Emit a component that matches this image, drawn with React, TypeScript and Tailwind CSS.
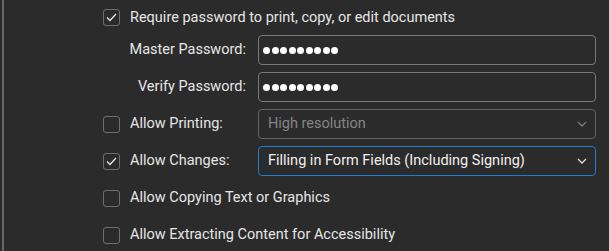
import { type FC } from "react";

const Check: FC<{ checked?: boolean }> = ({ checked }) => (
  <div className="w-[17px] h-[17px] shrink-0 rounded-[3px] border border-[#6e6e6e] flex items-center justify-center">
    {checked && (
      <svg width="11" height="9" viewBox="0 0 11 9" fill="none">
        <polyline points="1,4.5 4,7.5 10,1" stroke="#e8e8e8" strokeWidth="1.3" />
      </svg>
    )}
  </div>
);

const Chevron: FC<{ color: string }> = ({ color }) => (
  <svg width="10" height="6" viewBox="0 0 10 6" fill="none">
    <polyline points="1,1 5,5 9,1" stroke={color} strokeWidth="1.3" />
  </svg>
);

const Dots: FC = () => (
  <div className="flex gap-[1.5px]">
    {Array.from({ length: 9 }).map((_, i) => (
      <span key={i} className="w-[7px] h-[7px] rounded-full bg-white" />
    ))}
  </div>
);

const PasswordRow: FC<{ label: string }> = ({ label }) => (
  <div className="flex items-center h-[30px]">
    <div className="w-[143px] text-right">{label}</div>
    <div className="ml-[12px] w-[338px] h-[30px] rounded-[4px] border border-[#7a7a7a] flex items-center px-[4px]">
      <Dots />
    </div>
  </div>
);

const App: FC = () => {
  return (
    <div
      className="w-[609px] h-[251px] bg-[#2b2b2b] overflow-hidden pl-[2px] text-[14.5px] text-[#e6e6e6]"
      style={{ fontFamily: "Roboto, 'Liberation Sans', sans-serif" }}
    >
      <div className="h-full border-l-2 border-[#666666] pl-[99px]">
        <div className="flex flex-col">
          <div className="flex items-center h-[35px] gap-[10px]">
            <Check checked />
            <span>Require password to print, copy, or edit documents</span>
          </div>
          <div className="flex flex-col gap-[7px]">
            <PasswordRow label="Master Password:" />
            <PasswordRow label="Verify Password:" />

            <div className="flex items-center h-[30px]">
              <div className="w-[155px] flex items-center gap-[10px]">
                <Check />
                <span>Allow Printing:</span>
              </div>
              <div className="w-[338px] h-[30px] rounded-[4px] border border-[#626262] flex items-center justify-between pl-[9px] pr-[8px] text-[#858585]">
                <span>High resolution</span>
                <Chevron color="#7a7a7a" />
              </div>
            </div>

            <div className="flex items-center h-[30px]">
              <div className="w-[155px] flex items-center gap-[10px]">
                <Check checked />
                <span>Allow Changes:</span>
              </div>
              <div className="w-[338px] h-[30px] rounded-[4px] border border-[#1f7dd0] flex items-center justify-between pl-[9px] pr-[8px] text-[#f0f0f0]">
                <span>Filling in Form Fields (Including Signing)</span>
                <Chevron color="#e0e0e0" />
              </div>
            </div>

            <div className="flex items-center h-[30px] gap-[10px]">
              <Check />
              <span>Allow Copying Text or Graphics</span>
            </div>
            <div className="flex items-center h-[30px] gap-[10px]">
              <Check />
              <span>Allow Extracting Content for Accessibility</span>
            </div>
          </div>
        </div>
      </div>
    </div>
  );
};

export default App;
